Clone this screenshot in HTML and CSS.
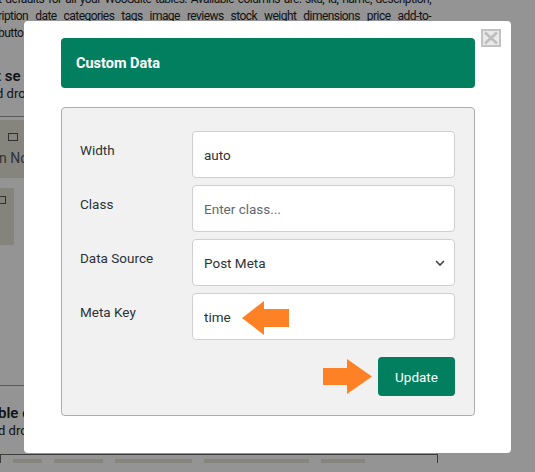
FILE: index.html
```html
<!DOCTYPE html>
<html lang="en">
<head>
    <meta charset="UTF-8">
    <meta name="viewport" content="width=device-width, initial-scale=1.0">
    <title>Custom Data</title>
    <link rel="stylesheet" href="styles.css">
</head>
<body>

    <!-- settings page behind the modal -->
    <div class="page">
        <div class="intro">
            <div class="line">t defaults for all your WooSuite tables. Available columns are: sku, id, name, description,</div>
            <div class="line">ription date categories tags image reviews stock weight dimensions price add-to-</div>
            <div class="line last">butto</div>
        </div>

        <div class="section">
            <h3>t se</h3>
            <p>d dro</p>
        </div>
        <hr class="rule">
        <div class="thead">
            <span class="tiny-icon"></span>
            <span class="thead-text">n Nov</span>
        </div>
        <div class="trow"><span class="tiny-icon"></span></div>

        <hr class="rule lower">
        <div class="section second">
            <h3>ble c</h3>
            <p>d dro</p>
        </div>
        <div class="cols">
            <span style="width:29px"></span>
            <span style="width:49px"></span>
            <span style="width:77px"></span>
            <span style="width:105px"></span>
            <span style="width:44px"></span>
        </div>
    </div>

    <div class="backdrop">
        <div class="modal">
            <button class="close" aria-label="Close">
                <svg width="20" height="18" viewBox="0 0 20 18">
                    <rect x="1" y="1" width="18" height="16" fill="#e9e9e9" stroke="#c2c2c2" stroke-width="2"/>
                    <path d="M4 3.5 L16 14.5 M16 3.5 L4 14.5" stroke="#bdbdbd" stroke-width="2.6"/>
                </svg>
            </button>

            <div class="modal-header">Custom Data</div>

            <div class="panel">
                <div class="field">
                    <label for="width">Width</label>
                    <div class="control">
                        <input type="text" id="width" value="auto">
                    </div>
                </div>
                <div class="field">
                    <label for="cls">Class</label>
                    <div class="control">
                        <input type="text" id="cls" placeholder="Enter class...">
                    </div>
                </div>
                <div class="field">
                    <label for="source">Data Source</label>
                    <div class="control">
                        <select id="source">
                            <option>Post Meta</option>
                        </select>
                        <svg class="chevron" width="10" height="6" viewBox="0 0 10 6">
                            <path d="M1 1 L5 5 L9 1" fill="none" stroke="#3c434a" stroke-width="1.6"/>
                        </svg>
                    </div>
                </div>
                <div class="field">
                    <label for="metakey">Meta Key</label>
                    <div class="control">
                        <input type="text" id="metakey" value="time">
                        <!-- callout arrow -->
                        <svg class="arrow-left" width="47" height="34" viewBox="0 0 47 34">
                            <polygon points="0,17 22,0 22,8 47,8 47,26 22,26 22,34" fill="#ff8126"/>
                        </svg>
                    </div>
                </div>

                <div class="actions">
                    <svg width="49" height="35" viewBox="0 0 49 35">
                        <polygon points="0,9 24,9 24,0 49,17.5 24,35 24,26 0,26" fill="#ff8126"/>
                    </svg>
                    <button class="btn-update">Update</button>
                </div>
            </div>
        </div>
    </div>

</body>
</html>
```

FILE: styles.css
```css
body {
    margin: 0;
    background: #fff;
    font-family: Roboto, 'Noto Sans', sans-serif;
    color: #1d2327;
    overflow: hidden;
}

/* page behind */
.page {
    width: 535px;
    height: 472px;
}
.intro {
    width: 433px;
    margin-top: -9px;
    margin-left: -2px;
    font-size: 12px;
    letter-spacing: -0.55px;
    line-height: 17px;
}
.intro .line {
    text-align: justify;
    text-align-last: justify;
    white-space: nowrap;
}
.intro .line.last {
    text-align-last: left;
}
.section {
    margin-top: 25px;
    margin-left: -4px;
}
.section h3 {
    margin: 0;
    font-size: 15px;
    line-height: 18px;
    font-weight: 600;
}
.section p {
    margin: 0;
    font-size: 13px;
    line-height: 18px;
}
.rule {
    margin: 13px 0 0;
    border: 0;
    border-top: 1px solid #999;
    width: 30px;
}
.thead {
    margin-top: 3px;
    height: 58px;
    width: 30px;
    background: #e6e6da;
    position: relative;
}
.thead .tiny-icon {
    position: absolute;
    left: 8px;
    top: 13px;
}
.thead-text {
    position: absolute;
    left: -1px;
    top: 30px;
    font-size: 14px;
    white-space: nowrap;
    color: #50575e;
}
.trow {
    margin-top: 10px;
    height: 57px;
    width: 14px;
    background: #e4e4d8;
    position: relative;
}
.trow .tiny-icon {
    position: absolute;
    left: -4px;
    top: 8px;
}
.tiny-icon {
    display: block;
    width: 8px;
    height: 6px;
    border: 1px solid #555;
}
.rule.lower {
    margin-top: 140px;
}
.section.second {
    margin-top: 18px;
    margin-left: -2px;
}
.cols {
    margin-top: 14px;
    width: 424px;
    height: 20px;
    border: 1px solid #666;
    display: flex;
    gap: 12px;
    padding: 4px 0 0 12px;
}
.cols span {
    display: block;
    height: 20px;
    background: #e6e6da;
}

/* modal */
.backdrop {
    position: fixed;
    inset: 0;
    background: rgba(0, 0, 0, 0.42);
    padding: 21px 24px;
}
.modal {
    position: relative;
    width: 487px;
    box-sizing: border-box;
    padding: 17px 36px 37px 37px;
    background: #fff;
    border-radius: 4px;
}
.close {
    position: absolute;
    top: 8px;
    right: 10px;
    padding: 0;
    border: none;
    background: none;
    line-height: 0;
}
.modal-header {
    height: 50px;
    box-sizing: border-box;
    padding: 0 15px;
    display: flex;
    align-items: center;
    background: #017f5f;
    color: #fff;
    border-radius: 4px;
    font-size: 14.5px;
    font-weight: 700;
}
.panel {
    margin-top: 19px;
    padding: 23px 19px 19px 18px;
    background: #f1f1f1;
    border: 1px solid #adadad;
    border-radius: 4px;
}
.field {
    display: flex;
    margin-bottom: 7px;
}
.field label {
    width: 112px;
    flex: none;
    padding-top: 9px;
    font-size: 13.5px;
    line-height: 20px;
    color: #2c3338;
}
.control {
    position: relative;
    flex: 1;
}
.control input,
.control select {
    display: block;
    width: 100%;
    height: 47px;
    box-sizing: border-box;
    padding: 0 11px;
    border: 1px solid #cfcfcf;
    border-radius: 4px;
    background: #fff;
    font-family: inherit;
    font-size: 13.5px;
    color: #2c3338;
    appearance: none;
    outline: none;
}
.control input::placeholder {
    color: #646970;
}
.chevron {
    position: absolute;
    right: 10px;
    top: 21px;
}
.arrow-left {
    position: absolute;
    left: 50px;
    top: 8px;
}
.actions {
    display: flex;
    justify-content: flex-end;
    align-items: center;
    gap: 6px;
    margin-top: 17px;
}
.actions svg {
    display: block;
}
.btn-update {
    width: 77px;
    height: 39px;
    border: none;
    border-radius: 4px;
    background: #017f5f;
    color: #fff;
    font-family: inherit;
    font-size: 13.5px;
    padding: 0;
}
```
